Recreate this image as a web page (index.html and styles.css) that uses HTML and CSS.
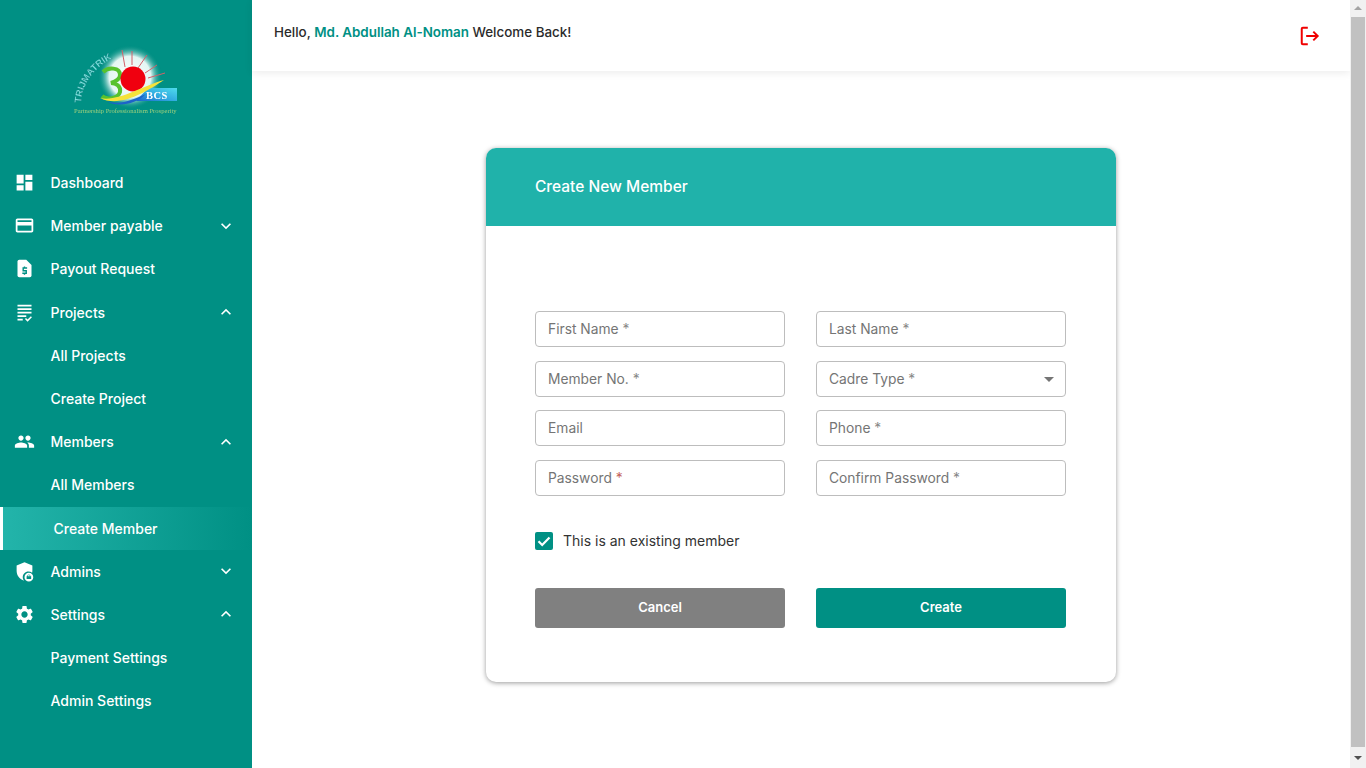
FILE: index.html
```html
<!DOCTYPE html>
<html>
  <head>
    <meta charset="utf-8">
    <title>Create Member</title>
    <meta name="viewport" content="width=device-width, initial-scale=1">
    <link rel="stylesheet" href="styles.css">
  </head>
  <body>
    <aside class="sidebar">
      <div class="logo">
        <svg width="112" height="72" viewBox="0 0 112 72">
          <defs>
            <radialGradient id="glow">
              <stop offset="0" stop-color="#ffffff"/>
              <stop offset="0.65" stop-color="#e4f6f3"/>
              <stop offset="1" stop-color="#009084" stop-opacity="0"/>
            </radialGradient>
            <linearGradient id="bar" x1="0" y1="1" x2="1" y2="0">
              <stop offset="0" stop-color="#1a62cc"/>
              <stop offset="0.45" stop-color="#2fa8e0"/>
              <stop offset="1" stop-color="#4fdcec"/>
            </linearGradient>
            <path id="arc" d="M11 57C12 37 26 17 53 8"/>
          </defs>
          <circle cx="60" cy="31" r="32" fill="url(#glow)"/>
          <path class="rays" d="M52 4L55 21M62 5V19M77 9L68 22M87 19L75 27M95 27L78 32"/>
          <path class="three" d="M33 26C38 21 50 21 50 29C50 34 44 36 41 37C46 37 51 40 50 46C48 53 36 54 32 50"/>
          <circle cx="63" cy="33" r="12.5" fill="#f0000f"/>
          <path d="M78 42H107V55H66Z" fill="url(#bar)"/>
          <path d="M30 52C48 56 72 40 94 34C76 46 50 62 30 52Z" fill="#f5e23a"/>
          <path d="M36 55C50 60 64 53 76 48C66 58 48 62 36 55Z" fill="#1d63c9"/>
          <text class="logo-bcs" x="76" y="53">BCS</text>
          <text class="logo-name"><textPath href="#arc">TRIJMATRIK</textPath></text>
          <text class="logo-tag" x="4" y="66.5">Partnership Professionalism Prosperity</text>
        </svg>
      </div>
      <nav class="menu">
        <a class="menu-item">
          <svg class="menu-icon" viewBox="0 0 24 24"><path d="M3 13h8V3H3v10zm0 8h8v-6H3v6zm10 0h8V11h-8v10zm0-18v6h8V3h-8z"/></svg>
          <span>Dashboard</span>
        </a>
        <a class="menu-item">
          <svg class="menu-icon" viewBox="0 0 24 24"><path d="M20 4H4c-1.11 0-1.99.89-1.99 2L2 18c0 1.11.89 2 2 2h16c1.11 0 2-.89 2-2V6c0-1.11-.89-2-2-2zm0 14H4v-6h16v6zm0-10H4V6h16v2z"/></svg>
          <span>Member payable</span>
          <svg class="chevron" viewBox="0 0 24 24"><path d="M7.41 8.59L12 13.17l4.59-4.58L18 10l-6 6-6-6z"/></svg>
        </a>
        <a class="menu-item">
          <svg class="menu-icon" viewBox="0 0 24 24"><path d="M14 2H6a2 2 0 0 0-2 2v16a2 2 0 0 0 2 2h12a2 2 0 0 0 2-2V8z"/><path class="dollar" d="M15 11.5h-4.5v3h3.5v3H9.5M12 9.8v1.7M12 17.5v1.7"/></svg>
          <span>Payout Request</span>
        </a>
        <a class="menu-item">
          <svg class="menu-icon" viewBox="0 0 24 24"><path d="M4 3h16v2H4zM4 7h16v2H4zM4 11h16v2H4zM4 15h10v2H4zM4 19h6v2H4zM12.5 19.5l1.2-1.2 1.8 1.8 3.8-3.8 1.2 1.2-5 5z"/></svg>
          <span>Projects</span>
          <svg class="chevron" viewBox="0 0 24 24"><path d="M7.41 15.41L12 10.83l4.59 4.58L18 14l-6-6-6 6z"/></svg>
        </a>
        <a class="menu-item sub">All Projects</a>
        <a class="menu-item sub">Create Project</a>
        <a class="menu-item">
          <svg class="menu-icon" viewBox="0 0 24 24"><path d="M16 11c1.66 0 2.99-1.34 2.99-3S17.66 5 16 5c-1.66 0-3 1.34-3 3s1.34 3 3 3zm-8 0c1.66 0 2.99-1.34 2.99-3S9.66 5 8 5C6.34 5 5 6.34 5 8s1.34 3 3 3zm0 2c-2.33 0-7 1.17-7 3.5V19h14v-2.5c0-2.33-4.67-3.5-7-3.5zm8 0c-.29 0-.62.02-.97.05 1.16.84 1.97 1.97 1.97 3.45V19h6v-2.5c0-2.33-4.67-3.5-7-3.5z"/></svg>
          <span>Members</span>
          <svg class="chevron" viewBox="0 0 24 24"><path d="M7.41 15.41L12 10.83l4.59 4.58L18 14l-6-6-6 6z"/></svg>
        </a>
        <a class="menu-item sub">All Members</a>
        <a class="menu-item sub active">Create Member</a>
        <a class="menu-item">
          <svg class="menu-icon" viewBox="0 0 24 24"><path d="M12 1.5L3 5v6.5c0 5 3.6 9.7 8.6 11-.9-1-1.6-2.4-1.6-4 0-3.6 2.9-6.5 6.5-6.5 1.6 0 3 .5 4.2 1.4.2-.9.3-1.5.3-2.4V5l-9-3.5z"/><path d="M17 13.5a5 5 0 1 0 0 10 5 5 0 0 0 0-10zm2.6 7.2h-5.2v-3.2h.8v-.4a1.8 1.8 0 0 1 3.6 0v.4h.8zm-1.6-3.2v-.4a1 1 0 0 0-2 0v.4z" fill-rule="evenodd"/></svg>
          <span>Admins</span>
          <svg class="chevron" viewBox="0 0 24 24"><path d="M7.41 8.59L12 13.17l4.59-4.58L18 10l-6 6-6-6z"/></svg>
        </a>
        <a class="menu-item">
          <svg class="menu-icon" viewBox="0 0 24 24"><path d="M19.14 12.94c.04-.3.06-.61.06-.94 0-.32-.02-.64-.07-.94l2.03-1.58c.18-.14.23-.41.12-.61l-1.92-3.32c-.12-.22-.37-.29-.59-.22l-2.39.96c-.5-.38-1.03-.7-1.62-.94l-.36-2.54c-.04-.24-.24-.41-.48-.41h-3.84c-.24 0-.43.17-.47.41l-.36 2.54c-.59.24-1.13.57-1.62.94l-2.39-.96c-.22-.08-.47 0-.59.22L2.74 8.87c-.12.21-.08.47.12.61l2.03 1.58c-.05.3-.09.63-.09.94s.02.64.07.94l-2.03 1.58c-.18.14-.23.41-.12.61l1.92 3.32c.12.22.37.29.59.22l2.39-.96c.5.38 1.03.7 1.62.94l.36 2.54c.05.24.24.41.48.41h3.84c.24 0 .44-.17.47-.41l.36-2.54c.59-.24 1.13-.56 1.62-.94l2.39.96c.22.08.47 0 .59-.22l1.92-3.32c.12-.22.07-.47-.12-.61l-2.01-1.58zM12 15.6c-1.98 0-3.6-1.62-3.6-3.6s1.62-3.6 3.6-3.6 3.6 1.62 3.6 3.6-1.62 3.6-3.6 3.6z"/></svg>
          <span>Settings</span>
          <svg class="chevron" viewBox="0 0 24 24"><path d="M7.41 15.41L12 10.83l4.59 4.58L18 14l-6-6-6 6z"/></svg>
        </a>
        <a class="menu-item sub">Payment Settings</a>
        <a class="menu-item sub">Admin Settings</a>
      </nav>
    </aside>

    <div class="main">
      <header class="topbar">
        <p class="greeting">Hello, <span class="user-name">Md. Abdullah Al-Noman</span> Welcome Back!</p>
        <svg class="logout" viewBox="0 0 20 20"><path d="M8 2.5H3.5a1 1 0 0 0-1 1v13a1 1 0 0 0 1 1H8M6.5 10H17M13 6l4 4-4 4" fill="none" stroke="#f00000" stroke-width="1.8"/></svg>
      </header>

      <div class="content">
        <section class="card">
          <div class="card-header">Create New Member</div>
          <form class="card-body">
            <div class="form-grid">
              <div class="field">First Name <i>*</i></div>
              <div class="field">Last Name <i>*</i></div>
              <div class="field">Member No. <i>*</i></div>
              <div class="field select">Cadre Type <i>*</i><b class="caret"></b></div>
              <div class="field">Email</div>
              <div class="field">Phone <i>*</i></div>
              <div class="field">Password <i class="red">*</i></div>
              <div class="field">Confirm Password <i>*</i></div>
            </div>
            <label class="check">
              <span class="box">
                <svg viewBox="0 0 18 18"><path d="M3.5 9.3l3.7 3.7L14.5 5.5" fill="none" stroke="#fff" stroke-width="2.2"/></svg>
              </span>
              This is an existing member
            </label>
            <div class="actions">
              <button type="button" class="btn cancel">Cancel</button>
              <button type="button" class="btn create">Create</button>
            </div>
          </form>
        </section>
      </div>
    </div>

    <div class="scrollbar">
      <span class="arrow up"></span>
      <span class="thumb"></span>
      <span class="arrow down"></span>
    </div>
  </body>
</html>
```

FILE: styles.css
```css
html,
body {
  height: 100%;
}

body {
  margin: 0;
  display: flex;
  height: 768px;
  overflow: hidden;
  font-family: Inter, "Noto Sans", Arial, sans-serif;
  font-size: 14px;
  color: #222;
  background: #fff;
}

/* sidebar */
.sidebar {
  width: 252px;
  flex-shrink: 0;
  background: #009084;
  color: #fff;
}

.logo {
  height: 161px;
  box-sizing: border-box;
  padding: 46px 0 0 70px;
}

.logo svg {
  display: block;
  overflow: visible;
  filter: blur(0.35px);
}

.rays {
  fill: none;
  stroke: #d2606a;
  stroke-width: 1;
}

.three {
  fill: none;
  stroke: #57c22e;
  stroke-width: 4;
}

.logo-bcs {
  font-family: "Liberation Serif", serif;
  font-weight: 700;
  font-size: 10.5px;
  letter-spacing: 0.4px;
  fill: #fff;
}

.logo-name {
  font-family: "Liberation Sans", sans-serif;
  font-size: 9.5px;
  font-weight: 700;
  fill: #7fe4e0;
  stroke: #0c5f66;
  stroke-width: 0.2px;
}

.logo-tag {
  font-family: "Liberation Serif", serif;
  font-size: 6.6px;
  fill: #9fd07c;
}

.menu-item {
  display: flex;
  align-items: center;
  height: 43.2px;
  padding: 0 16px;
  font-size: 14px;
  font-weight: 500;
}

.menu-icon {
  width: 21px;
  height: 21px;
  margin-left: -2px;
  margin-right: 15.5px;
  fill: #fff;
  flex-shrink: 0;
}

.dollar {
  fill: none;
  stroke: #009084;
  stroke-width: 1.6;
}

.chevron {
  width: 20px;
  height: 20px;
  margin-left: auto;
  fill: #fff;
}

.sub {
  padding-left: 50.5px;
}

.active {
  padding-left: 50.5px;
  border-left: 3px solid #fff;
  background: linear-gradient(90deg, #23b4aa, #009084);
}

/* top bar */
.main {
  flex: 1;
  min-width: 0;
  display: flex;
  flex-direction: column;
}

.topbar {
  height: 71px;
  flex-shrink: 0;
  display: flex;
  justify-content: space-between;
  padding: 0 30px 0 22px;
  background: #fff;
  box-shadow: 0 2px 8px rgba(0, 0, 0, 0.08);
}

.greeting {
  margin: 24px 0 0;
  font-size: 13.4px;
  font-weight: 500;
  line-height: 17px;
  color: #2b2b2b;
}

.user-name {
  color: #009084;
  font-weight: 600;
}

.logout {
  width: 22px;
  height: 22px;
  margin-top: 25px;
  margin-right: -1px;
}

/* card */
.content {
  display: flex;
  justify-content: center;
  padding-top: 77px;
}

.card {
  width: 630px;
  height: 534px;
  border-radius: 10px;
  background: #fff;
  box-shadow: 0 1px 5px rgba(0, 0, 0, 0.4);
  overflow: hidden;
}

.card-header {
  height: 78px;
  box-sizing: border-box;
  padding: 30px 0 0 49px;
  background: #20b2aa;
  color: #fff;
  font-size: 15.5px;
  font-weight: 500;
  line-height: 18px;
}

.card-body {
  padding: 85px 50px 0 49px;
}

.form-grid {
  display: grid;
  grid-template-columns: 250px 250px;
  grid-auto-rows: 36px;
  column-gap: 31px;
  row-gap: 13.5px;
}

.field {
  position: relative;
  box-sizing: border-box;
  border: 1px solid #bdbdbd;
  border-radius: 4px;
  padding-left: 12px;
  line-height: 34px;
  font-size: 13.8px;
  color: #757575;
}

.field i {
  font-style: normal;
  color: #888;
}

.field i.red {
  color: #c4625c;
}

.caret {
  position: absolute;
  right: 11px;
  top: 15px;
  border-left: 5px solid transparent;
  border-right: 5px solid transparent;
  border-top: 5px solid #757575;
}

.check {
  display: flex;
  align-items: center;
  gap: 10px;
  margin-top: 36px;
  height: 18px;
  font-size: 14px;
  color: #333;
}

.box {
  width: 18px;
  height: 18px;
  border-radius: 2px;
  background: #009084;
}

.box svg {
  display: block;
}

.actions {
  display: grid;
  grid-template-columns: 250px 250px;
  column-gap: 31px;
  margin-top: 38px;
}

.btn {
  height: 40px;
  padding: 0 0 2px;
  border: 0;
  border-radius: 3px;
  color: #fff;
  font-family: inherit;
  font-size: 13px;
  font-weight: 600;
}

.cancel {
  background: #808080;
}

.create {
  background: #009084;
}

/* page scrollbar */
.scrollbar {
  width: 16px;
  flex-shrink: 0;
  display: flex;
  flex-direction: column;
  background: #f1f1f1;
}

.thumb {
  flex: 1;
  margin: 0 1px;
  background: #c1c1c1;
}

.arrow {
  flex-shrink: 0;
  position: relative;
}

.up {
  height: 17px;
}

.down {
  height: 21px;
}

.arrow::after {
  content: "";
  position: absolute;
  left: 4px;
  border-left: 4px solid transparent;
  border-right: 4px solid transparent;
}

.up::after {
  top: 6px;
  border-bottom: 4px solid #a3a3a3;
}

.down::after {
  top: 9px;
  border-top: 4px solid #505050;
}
```
